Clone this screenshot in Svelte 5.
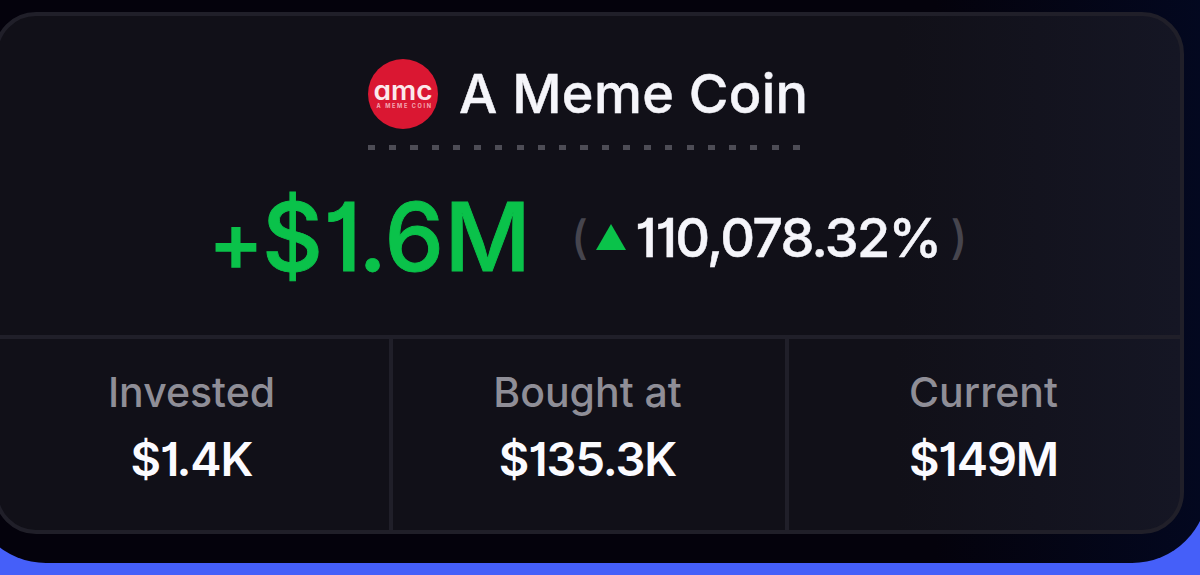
<script lang="ts">
	const token = 'A Meme Coin';
	const profit = '$1.6M';
	const change = '110,078.32%';

	const stats = [
		{ id: 'invested', label: 'Invested', value: '$1.4K' },
		{ id: 'bought', label: 'Bought at', value: '$135.3K' },
		{ id: 'current', label: 'Current', value: '$149M' }
	];
</script>

<div class="page">
	<div class="panel">
		<section class="card">
			<div class="summary">
				<!-- Token -->
				<div class="token">
					<svg class="token-logo" viewBox="0 0 70 70" aria-hidden="true">
						<circle cx="35" cy="35" r="35" fill="#da1732" />
						<text class="logo-mark" x="5.5" y="41" textLength="59" lengthAdjust="spacingAndGlyphs">amc</text>
						<text class="logo-sub" x="8.5" y="48.5" textLength="54.5">A MEME COIN</text>
					</svg>
					<h1>{token}</h1>
				</div>
				<div class="dots"></div>

				<!-- Profit -->
				<div class="result">
					<span class="profit"><span class="sign">+</span>{profit}</span>
					<span class="change">
						<span class="paren">(</span>
						<svg class="arrow" viewBox="0 0 30 26" aria-hidden="true">
							<path d="M15 0 30 26H0z" fill="#0ac24a" />
						</svg>
						<span class="percent">{change}</span>
						<span class="paren">)</span>
					</span>
				</div>
			</div>

			<div class="stats">
				{#each stats as stat}
					<div class="stat {stat.id}">
						<span class="stat-label">{stat.label}</span>
						<span class="stat-value">{stat.value}</span>
					</div>
				{/each}
			</div>
		</section>
	</div>
</div>

<style>
	:global(body) {
		background: #455ff9;
	}

	.page {
		width: 1200px;
		height: 575px;
		overflow: hidden;
		background: #455ff9;
		font-family: Inter, 'Liberation Sans', sans-serif;
		font-weight: 500;
		font-feature-settings: 'cv01';
	}

	.panel {
		box-sizing: border-box;
		width: 1238px;
		height: 562.5px;
		margin-left: -30px;
		padding: 12px 24px 28px;
		border-radius: 0 0 76px 76px;
		background: linear-gradient(90deg, #04020c 78%, #030820 100%);
	}

	.card {
		box-sizing: border-box;
		display: flex;
		flex-direction: column;
		height: 522px;
		border: 4px solid #201f29;
		border-radius: 42px;
		background: linear-gradient(90deg, #111018 76%, #151624 100%);
	}

	.summary {
		display: flex;
		flex-direction: column;
		align-items: center;
		height: 319px;
		border-bottom: 4px solid #201f29;
	}

	.token {
		display: flex;
		align-items: center;
		gap: 21px;
		width: 442px;
		height: 70px;
		margin-top: 43px;
	}

	.token-logo {
		flex: none;
		width: 70px;
		height: 70px;
	}

	.logo-mark {
		font-size: 26px;
		font-weight: 600;
		font-feature-settings: 'cv11';
		fill: #fbe9ec;
	}

	.logo-sub {
		font-size: 5.6px;
		font-weight: 700;
		fill: #f3aab4;
	}

	h1 {
		margin: 0;
		font-size: 54px;
		font-weight: 500;
		line-height: 70px;
		letter-spacing: 0.3px;
		white-space: nowrap;
		color: #f5f5fa;
		-webkit-text-stroke: 0.5px #f5f5fa;
	}

	.dots {
		width: 442px;
		height: 5px;
		margin-top: 16px;
		background: repeating-linear-gradient(90deg, #4d4c55 0 7px, transparent 7px 21.25px);
	}

	.result {
		display: flex;
		align-items: center;
		align-self: flex-start;
		height: 110px;
		margin: 32px 0 0 210px;
		white-space: nowrap;
	}

	.profit {
		display: flex;
		width: 363px;
		height: 110px;
		font-size: 94.5px;
		line-height: 110px;
		letter-spacing: 0.3px;
		color: #0ac24a;
		-webkit-text-stroke: 0.9px #0ac24a;
	}

	.sign {
		width: 54px;
		padding-top: 4px;
		font-size: 83px;
		font-weight: 600;
		-webkit-text-stroke: 0;
	}

	.change {
		display: flex;
		align-items: center;
		font-size: 54px;
		color: #f5f5fa;
	}

	.percent {
		letter-spacing: -1.75px;
		-webkit-text-stroke: 0.5px #f5f5fa;
	}

	.paren {
		font-size: 46px;
		color: #46454e;
	}

	.percent + .paren {
		margin-left: 10px;
	}

	.arrow {
		width: 30px;
		height: 26px;
		margin: 0 9px 0 8px;
	}

	.stats {
		display: grid;
		grid-template-columns: 395px 396px 1fr;
		flex: 1;
	}

	.stat {
		display: flex;
		flex-direction: column;
		align-items: center;
		padding-top: 28px;
		border-right: 4px solid #201f29;
	}

	.invested {
		padding-right: 4px;
	}

	.bought {
		padding-right: 3px;
	}

	.current {
		padding-right: 2px;
		border-right: none;
	}

	.stat-label {
		font-size: 41px;
		line-height: 50px;
		color: #8f8e97;
	}

	.stat-value {
		margin-top: 12px;
		font-size: 47px;
		font-weight: 600;
		line-height: 60px;
		letter-spacing: -1.1px;
		color: #fbfbff;
	}
</style>
